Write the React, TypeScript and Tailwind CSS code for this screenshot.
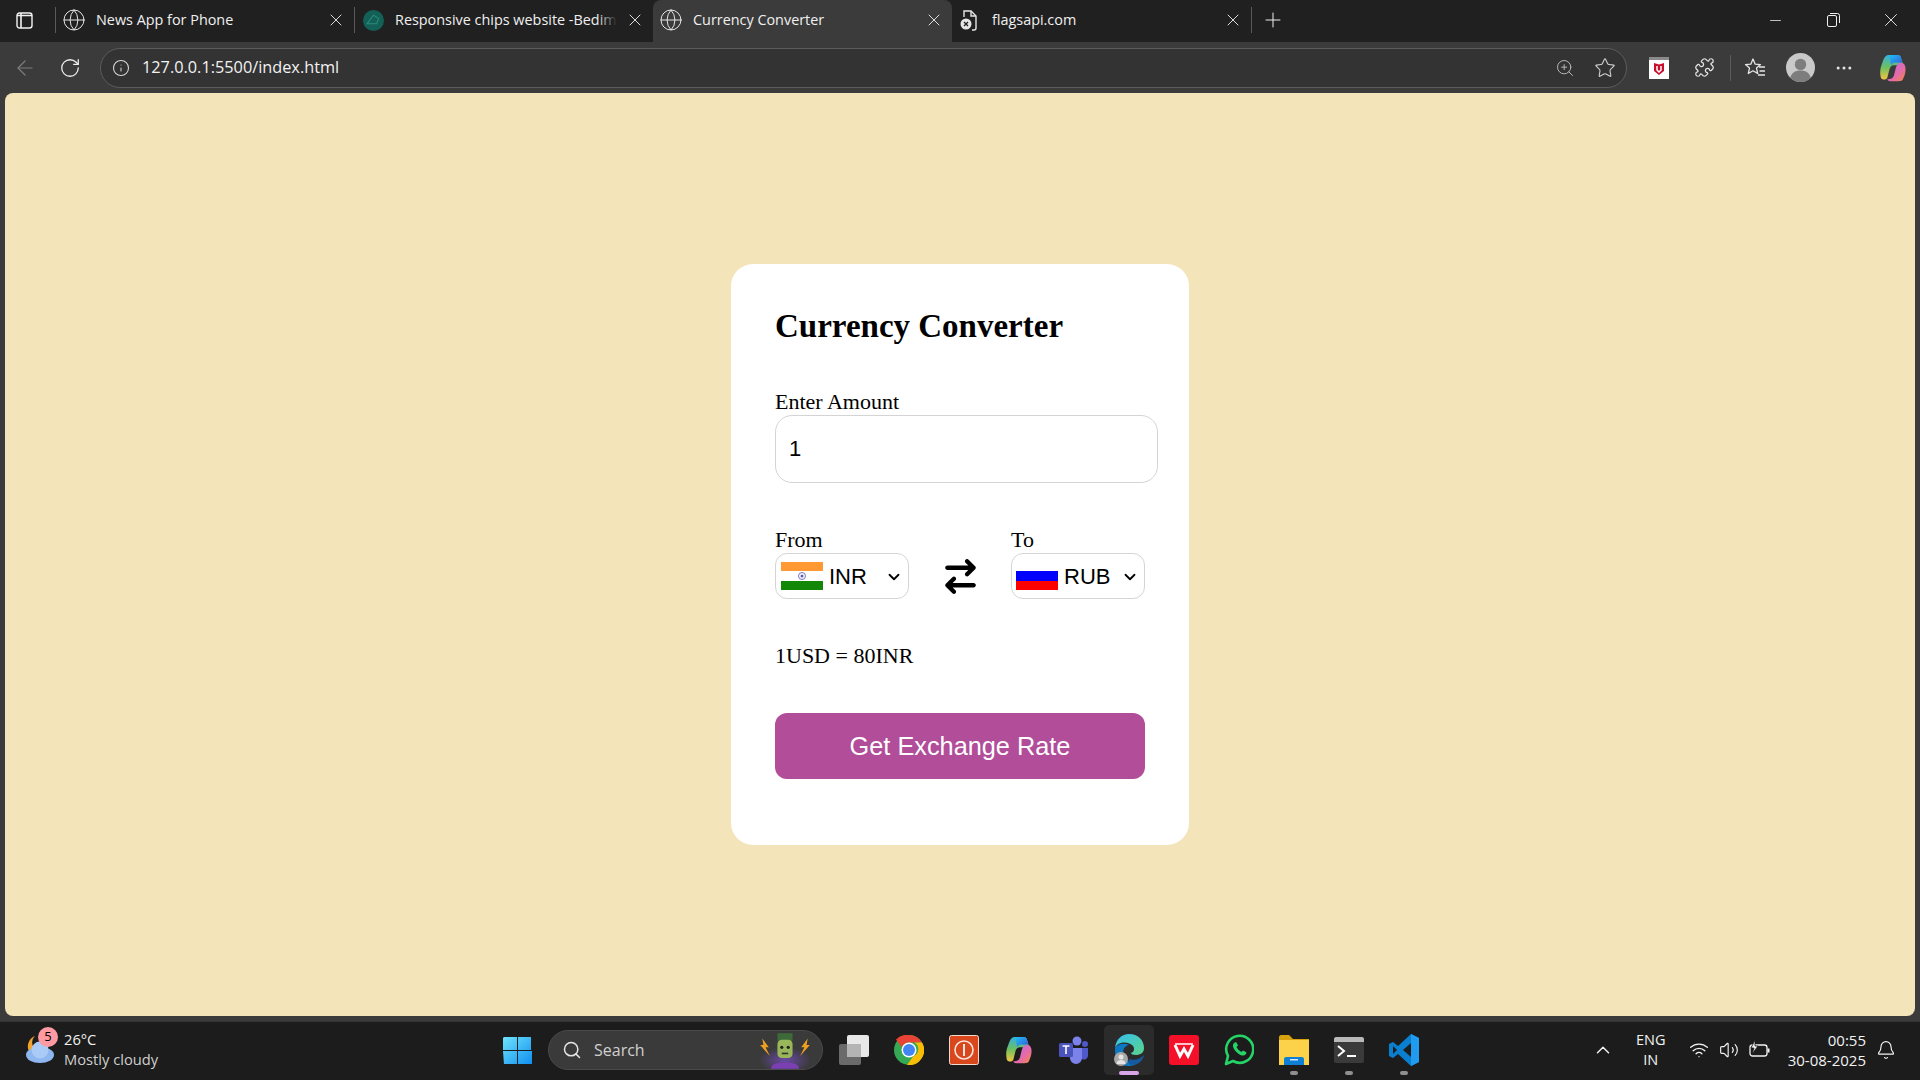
import { ArrowLeft, Bell, ChevronDown, ChevronUp, Globe, Info, Minus, MoreHorizontal, Plus, Puzzle, RotateCw, Search, Star, Volume2, Wifi, X, ZoomIn } from 'lucide-react';
import { FaArrowRightArrowLeft } from 'react-icons/fa6';

const uiFont = 'font-["Open_Sans",sans-serif]';

function CopilotIcon({ size = 26, id }: { size?: number; id: string }) {
  return (
    <svg width={size} height={size} viewBox="0 0 32 32">
      <defs>
        <linearGradient id={`${id}A`} x1="0" y1="0" x2="1" y2="1">
          <stop offset="0" stopColor="#19c3f0" />
          <stop offset="0.6" stopColor="#2f7fe8" />
          <stop offset="1" stopColor="#3a4fc0" />
        </linearGradient>
        <linearGradient id={`${id}B`} x1="0" y1="0" x2="0" y2="1">
          <stop offset="0" stopColor="#35b0e0" />
          <stop offset="0.5" stopColor="#6cc060" />
          <stop offset="1" stopColor="#f5c542" />
        </linearGradient>
        <linearGradient id={`${id}C`} x1="0" y1="0" x2="1" y2="1">
          <stop offset="0" stopColor="#b86be8" />
          <stop offset="0.6" stopColor="#e66ba8" />
          <stop offset="1" stopColor="#f08a3c" />
        </linearGradient>
      </defs>
      <path d="M11 2h10c2 0 3 1 3.500 3L27 13H17c-3 0-4 2-5 5l-2 8c-1 3-6 3-7 0-1-4-1-9 1-14 1.500-4 3-10 7-10z" fill={`url(#${id}B)`} />
      <path d="M12 2h9c2 0 3 1 3.500 3L26 10h-8c-2 0-3 1-4 3z" fill={`url(#${id}A)`} />
      <path d="M23 11c3-1 5 0 6 3 1 4 0 9-2 13-1 3-3 3-5 3h-9c-2 0-3-1-3-2 4 0 6-1 7-4l2-8c1-3 2-5 4-5z" fill={`url(#${id}C)`} />
    </svg>
  );
}

function McAfeeIcon() {
  return (
    <svg width="20" height="22" viewBox="0 0 20 22">
      <rect width="20" height="22" fill="#ffffff" />
      <rect width="20" height="3" fill="#8a8a8a" />
      <path d="M5 6l5 1.500L15 6v8l-5 4-5-4z" fill="#c8102e" />
      <path d="M8 9v4l2 2 2-2V9" fill="none" stroke="#ffffff" strokeWidth="1.500" />
    </svg>
  );
}

function ChipsFavicon() {
  return (
    <svg width="21" height="21" viewBox="0 0 20 20">
      <circle cx="10" cy="10" r="10" fill="#136057" />
      <path d="M4 13l6-8 5 3-2 5z" fill="none" stroke="#2b8a7c" strokeWidth="1" />
    </svg>
  );
}

function BrokenDocIcon() {
  return (
    <svg width="18" height="22" viewBox="0 0 18 22" fill="none" stroke="#e6e6e6" strokeWidth="1.400" className="mr-[2px]">
      <path d="M4 8V2h7l5 5v12c0 1-1 2-2 2h-2" />
      <path d="M11 2v5h5" />
      <circle cx="6" cy="15" r="5.500" fill="#e6e6e6" stroke="none" />
      <path d="M4 13l4 4M8 13l-4 4" stroke="#202020" strokeWidth="1.300" />
    </svg>
  );
}

function FavoritesIcon() {
  return (
    <svg width="22" height="22" viewBox="0 0 22 22" fill="none" stroke="#e6e6e6" strokeWidth="1.300" strokeLinejoin="round">
      <path d="M9 2l2.200 5.200 5.300.4-4 3.500 1.200 5.400L9 13.800l-4.700 2.700 1.200-5.400-4-3.500 5.300-.4z" />
      <path d="M15 10h6M15.500 14h5.500M14 18h7" />
    </svg>
  );
}

function ProfileIcon() {
  return (
    <svg width="29" height="29" viewBox="0 0 28 28">
      <circle cx="14" cy="14" r="14" fill="#c9c9c9" />
      <circle cx="14" cy="11" r="5.500" fill="#7d7d7d" />
      <path d="M4 24c2-6 6-7 10-7s8 1 10 7c-3 3-6 4-10 4s-7-1-10-4z" fill="#7d7d7d" />
    </svg>
  );
}

function WindowsLogo() {
  return (
    <svg width="29" height="29" viewBox="0 0 30 30">
      <defs>
        <linearGradient id="winG" x1="0" y1="0" x2="1" y2="1">
          <stop offset="0" stopColor="#6fe3fb" />
          <stop offset="1" stopColor="#0f8ff0" />
        </linearGradient>
      </defs>
      <path d="M1 1h13.500v13.500H0V2zM15.500 1H29v13.500H15.500zM0 15.500h14.500V29H1zM15.500 15.500H30V29H15.500z" fill="url(#winG)" />
    </svg>
  );
}

function WeatherIcon() {
  return (
    <svg width="34" height="34" viewBox="0 0 34 34">
      <path d="M12 3a9 9 0 0 0 3 15L6 18C3 13 6 5 12 3z" fill="#f2a32e" />
      <ellipse cx="17" cy="22" rx="14" ry="8" fill="#8db7ee" />
      <circle cx="17" cy="17" r="8.500" fill="#a9cbf5" />
    </svg>
  );
}

function FrankIcon() {
  return (
    <svg width="54" height="37" viewBox="0 0 50 34">
      <defs>
        <radialGradient id="glow">
          <stop offset="0" stopColor="#6a49a8" />
          <stop offset="1" stopColor="#6a49a8" stopOpacity="0" />
        </radialGradient>
      </defs>
      <ellipse cx="25" cy="26" rx="24" ry="12" fill="url(#glow)" />
      <path d="M4 6l6 8-3 0 4 8-9-10 3 0zM46 6l-6 8 3 0-4 8 9-10-3 0z" fill="#f0a020" />
      <path d="M12 34c0-5 6-6 13-6s13 1 13 6z" fill="#7a3fb0" />
      <rect x="18" y="1" width="14" height="7" fill="#3e6a3a" />
      <rect x="18" y="7" width="14" height="17" rx="4" fill="#9ab65a" />
      <circle cx="22" cy="14" r="1.500" fill="#222" />
      <circle cx="28" cy="14" r="1.500" fill="#222" />
      <rect x="22" y="19" width="6" height="1.500" fill="#333" />
    </svg>
  );
}

function TaskView() {
  return (
    <svg width="30" height="30" viewBox="0 0 30 30">
      <rect x="8" y="0" width="22" height="22" rx="2" fill="#e8e8e8" />
      <rect x="0" y="9" width="22" height="21" rx="2" fill="#6a6a6a" />
      <rect x="8" y="9" width="14" height="13" fill="#b4b4b4" />
    </svg>
  );
}

function ChromeIcon() {
  return (
    <svg width="30" height="30" viewBox="0 0 30 30">
      <circle cx="15" cy="15" r="15" fill="#34a853" />
      <path d="M15 0a15 15 0 0 1 13 7.500H15a7.500 7.500 0 0 0-7 5L2 4.500A15 15 0 0 1 15 0z" fill="#ea4335" />
      <path d="M28 7.500A15 15 0 0 1 13 30l6.500-9a7.500 7.500 0 0 0 1-13.500z" fill="#fbbc04" />
      <circle cx="15" cy="15" r="7.500" fill="#ffffff" />
      <circle cx="15" cy="15" r="6" fill="#4285f4" />
    </svg>
  );
}

function PowerAppIcon() {
  return (
    <svg width="30" height="30" viewBox="0 0 30 30">
      <rect x="0.500" y="0.500" width="29" height="29" rx="2" fill="#d9481c" stroke="#f4d9cf" />
      <circle cx="15" cy="15" r="9" fill="none" stroke="#f7e4dc" strokeWidth="1.600" />
      <rect x="14" y="9" width="2" height="12" fill="#f7e4dc" />
    </svg>
  );
}

function TeamsIcon() {
  return (
    <svg width="30" height="30" viewBox="0 0 30 30">
      <circle cx="18" cy="6" r="4.500" fill="#7b83eb" />
      <circle cx="26" cy="9" r="3" fill="#5059c9" />
      <path d="M21 13h8v8a4 4 0 0 1-6 3z" fill="#5059c9" />
      <path d="M9 13h14v10a6 6 0 0 1-12 0z" fill="#7b83eb" />
      <rect x="0" y="8" width="14" height="14" rx="1.500" fill="#4b53bc" />
      <path d="M3.500 11h7M7 11v8" stroke="#ffffff" strokeWidth="1.600" />
    </svg>
  );
}

function EdgeIcon() {
  return (
    <svg width="32" height="32" viewBox="0 0 32 32">
      <defs>
        <linearGradient id="edgeTop" x1="0" y1="0" x2="1" y2="1">
          <stop offset="0" stopColor="#35c1f1" />
          <stop offset="1" stopColor="#5bd38a" />
        </linearGradient>
      </defs>
      <path d="M2 14C3 5 9 0 16 0c9 0 15 6 15 14 0 5-4 7-8 7-3 0-5-1-5-2 3-1 4-4 2-7-4-5-15-5-18 2z" fill="url(#edgeTop)" />
      <path d="M2 14c3-5 10-5 14-3-5 1-7 6-5 11 2 4 6 8 12 8-3 2-6 2-8 2C7 32 1 24 2 14z" fill="#0c78c4" />
      <path d="M16 25c6 2 11 0 15-4-1 6-6 10-12 10-2 0-5-2-3-6z" fill="#155a9e" />
      <circle cx="8" cy="25" r="7" fill="#a8a8a8" />
      <circle cx="8" cy="23" r="2.500" fill="#e4e4e4" />
      <path d="M3.500 30c0-3 2-4 4.500-4s4.500 1 4.500 4z" fill="#e4e4e4" />
    </svg>
  );
}

function WpsIcon() {
  return (
    <svg width="30" height="34" viewBox="0 0 30 34">
      <rect y="2" width="30" height="30" rx="3" fill="#f5102a" />
      <path d="M6 12l5 11 4-7 4 7 5-11" fill="none" stroke="#ffffff" strokeWidth="3" />
      <path d="M6 11h18" stroke="#ffffff" strokeWidth="1.500" />
    </svg>
  );
}

function WhatsAppIcon() {
  return (
    <svg width="30" height="34" viewBox="0 0 30 34" fill="none">
      <path d="M2 31l2-8a13.500 13.500 0 1 1 5 5z" stroke="#25d366" strokeWidth="2.600" strokeLinejoin="round" />
      <path d="M10 10c-1 1-1.500 3-.5 5 1.500 3 4 5.500 7 7 2 1 4 .5 5-.5 1-1 1-2 .5-2.500l-3-1.500-1.500 1.500c-2-1-4-3-5-5l1.500-1.500-1.500-3c-.5-.5-1.500-.5-2.500.5z" fill="#25d366" />
    </svg>
  );
}

function FolderIcon() {
  return (
    <svg width="30" height="32" viewBox="0 0 30 32">
      <path d="M0 3c0-1 1-2 2-2h8l4 4h16v6H0z" fill="#d9a30f" />
      <rect y="6" width="30" height="25" fill="#fbd249" />
      <path d="M5 31v-6c0-1 1-2 2-2h16c1 0 2 1 2 2v6z" fill="#0f7fd6" />
      <rect x="11" y="25" width="8" height="1.500" fill="#cfe8fb" />
    </svg>
  );
}

function TerminalIcon() {
  return (
    <svg width="30" height="26" viewBox="0 0 30 26">
      <rect width="30" height="26" rx="2" fill="#3a3a3a" />
      <path d="M0 2c0-1 1-2 2-2h26c1 0 2 1 2 2v3H0z" fill="#b9b9b9" />
      <path d="M4 9l6 5-6 5" fill="none" stroke="#ffffff" strokeWidth="2" />
      <rect x="13" y="18" width="9" height="2" fill="#ffffff" />
    </svg>
  );
}

function VsCodeIcon() {
  return (
    <svg width="30" height="34" viewBox="0 0 30 34">
      <path d="M22 1l8 4v24l-8 4-13-12-5 4-4-2V11l4-2 5 4z" fill="#0a7fd0" />
      <path d="M22 1l8 4v24l-8 4z" fill="#1f9cf0" />
      <path d="M22 10l-8 7 8 7z" fill="#1d1d1d" />
      <path d="M4 13v8l4-4z" fill="#1d1d1d" />
    </svg>
  );
}

function BatteryIcon() {
  return (
    <svg width="22" height="20" viewBox="0 0 22 20" fill="none" stroke="#f2f2f2" strokeWidth="1.300">
      <rect x="1" y="5" width="17" height="11" rx="2.500" />
      <path d="M19.500 8.500v4" strokeWidth="2" />
      <path d="M6 0L2 8h3l-2 6 6-8H6z" fill="#f2f2f2" stroke="#1c1c1c" strokeWidth="0.800" />
    </svg>
  );
}

function Tab({ icon, title, active = false, width = 298 }: { icon: React.ReactNode; title: string; active?: boolean; width?: number }) {
  return (
    <div
      className={`flex h-full shrink-0 items-center pb-[2px] pl-[6px] pr-[8px] ${active ? 'rounded-t-[8px] bg-[#3b3b3b]' : ''}`}
      style={{ width }}
    >
      <span className="flex w-[24px] shrink-0 justify-center text-[#e6e6e6]">{icon}</span>
      <span className="relative ml-[10px] w-[222px] overflow-hidden whitespace-nowrap text-[14.4px] text-[#f0f0f0]">
        {title}
        {!active && <span className="absolute inset-y-0 right-0 w-[20px] bg-gradient-to-r from-transparent to-[#202020]" />}
      </span>
      <X size={20} strokeWidth={1.1} className="ml-auto shrink-0 text-[#eeeeee]" />
    </div>
  );
}

function Divider() {
  return <span className="mb-[2px] h-[26px] w-px shrink-0 bg-[#5a5a5a]" />;
}

function TaskSlot({ children, active = false, dot = false }: { children: React.ReactNode; active?: boolean; dot?: boolean }) {
  return (
    <div className={`relative mx-[2.500px] flex h-[50px] w-[50px] items-center justify-center rounded-[5px] ${active ? 'bg-[#2b2b2b]' : ''}`}>
      {children}
      {active && <span className="absolute bottom-[0px] left-[15px] h-[4px] w-[20px] rounded-full bg-[#d8a5e8]" />}
      {dot && <span className="absolute bottom-[0px] left-[21px] h-[4px] w-[8px] rounded-full bg-[#8f8f8f]" />}
    </div>
  );
}

function CurrencySelect({ flag, code }: { flag: React.ReactNode; code: string }) {
  return (
    <div className="relative flex h-[46px] w-[134px] items-center rounded-[12px] border border-[#d4d4d4] pl-[5px]">
      {flag}
      <select defaultValue={code} className="ml-[6px] h-full flex-1 appearance-none font-['Liberation_Sans',sans-serif] text-[22px] text-black outline-none">
        <option value={code}>{code}</option>
      </select>
      <ChevronDown size={18} strokeWidth={2.4} className="pointer-events-none absolute right-[5px] top-[14px] text-black" />
    </div>
  );
}

const indiaFlag = (
  <svg width="42" height="28" viewBox="0 0 42 28" className="shrink-0">
    <rect width="42" height="28" fill="#ffffff" />
    <rect width="42" height="9" fill="#ff9933" />
    <rect y="19" width="42" height="9" fill="#138808" />
    <circle cx="21" cy="14" r="3.500" fill="none" stroke="#7474c4" strokeWidth="1" />
    <circle cx="21" cy="14" r="1.500" fill="#5a5ab8" />
  </svg>
);

const russiaFlag = (
  <svg width="42" height="28" viewBox="0 0 42 28" className="ml-[-1px] shrink-0">
    <rect width="42" height="28" fill="#ffffff" />
    <rect y="9" width="42" height="10" fill="#0000ff" />
    <rect y="19" width="42" height="9" fill="#ff0000" />
  </svg>
);

export default function App() {
  return (
    <div className={`flex h-screen w-full flex-col overflow-hidden bg-[#3b3b3b] ${uiFont}`}>
      {/* Tab strip */}
      <div className="flex h-[42px] shrink-0 items-center bg-[#202020] pl-[16px]">
        <svg width="17" height="17" viewBox="0 0 17 17" fill="none" stroke="#f2f2f2" strokeWidth="1.400" className="mb-[2px] mr-[22px] shrink-0">
          <rect x="1" y="1" width="15" height="15" rx="2.500" />
          <path d="M1 3.500h15M5 1v15" strokeWidth="1.600" />
        </svg>
        <Divider />
        <Tab icon={<Globe size={24} strokeWidth={1} />} title="News App for Phone" />
        <Divider />
        <Tab icon={<ChipsFavicon />} title="Responsive chips website -Bedimcode" />
        <Tab active width={299} icon={<Globe size={24} strokeWidth={1} />} title="Currency Converter" />
        <Tab width={299} icon={<BrokenDocIcon />} title="flagsapi.com" />
        <Divider />
        <Plus size={24} strokeWidth={1} className="mb-[2px] ml-[9px] text-[#eeeeee]" />
        <div className="mb-[2px] ml-auto flex items-center text-[#eeeeee]">
          <span className="flex w-[58px] justify-center"><Minus size={17} strokeWidth={1.1} /></span>
          <span className="flex w-[58px] justify-center">
            <svg width="13" height="14" viewBox="0 0 13 14" fill="none" stroke="#eeeeee" strokeWidth="1">
              <rect x="0.500" y="2.500" width="9" height="11" rx="1.500" />
              <path d="M3 0.500h7.500a2 2 0 0 1 2 2V10" />
            </svg>
          </span>
          <span className="flex w-[58px] justify-center"><X size={22} strokeWidth={1} /></span>
        </div>
      </div>

      {/* Toolbar */}
      <div className="flex h-[51px] shrink-0 items-center pl-[13px]">
        <ArrowLeft size={24} strokeWidth={1.2} className="text-[#7d7d7d]" />
        <RotateCw size={22} strokeWidth={1.4} className="ml-[22px] text-[#eeeeee]" />
        <div className="ml-[19px] flex h-[40px] w-[1527px] items-center rounded-full border-[1.5px] border-[#5c5c5c] bg-[#333333] pl-[11px] pr-[10px]">
          <Info size={18} strokeWidth={1.4} className="text-[#d8d8d8]" />
          <span className="ml-[12px] text-[16.3px] text-[#f2f2f2]">127.0.0.1:5500/index.html</span>
          <ZoomIn size={20} strokeWidth={1.2} className="ml-auto text-[#b8b8b8]" />
          <Star size={22} strokeWidth={1.2} className="ml-[19px] text-[#d0d0d0]" />
        </div>
        <div className="ml-[22px] flex items-center"><McAfeeIcon /></div>
        <Puzzle size={21} strokeWidth={1.4} className="ml-[25px] text-[#e6e6e6]" />
        <span className="ml-[15px] h-[26px] w-px bg-[#5a5a5a]" />
        <span className="ml-[13px]"><FavoritesIcon /></span>
        <span className="ml-[20px]"><ProfileIcon /></span>
        <MoreHorizontal size={20} strokeWidth={1.6} className="ml-[19px] text-[#e6e6e6]" />
        <span className="ml-[24px]"><CopilotIcon size={30} id="copToolbar" /></span>
      </div>

      {/* Page */}
      <main className="mx-[5px] flex h-[923px] shrink-0 items-center justify-center rounded-[8px] bg-[#f4e4ba] font-['Liberation_Serif',serif]">
        <div className="h-[581px] w-[458px] rounded-[22px] bg-white px-[44px] pt-[44px] text-black">
          <h2 className="text-[33px] font-bold leading-[36px]">Currency Converter</h2>
          <label className="mt-[46px] block pb-[1px] text-[22px] leading-[24px]">Enter Amount</label>
          <input
            readOnly
            value="1"
            className="block h-[68px] w-[383px] rounded-[17px] border border-[#d4d4d4] px-[13px] font-['Liberation_Sans',sans-serif] text-[22px] outline-none"
          />
          <div className="mt-[45px] flex items-end justify-between">
            <div>
              <label className="block pb-[1px] text-[22px] leading-[24px]">From</label>
              <CurrencySelect flag={indiaFlag} code="INR" />
            </div>
            <FaArrowRightArrowLeft size={35} className="mb-[5px]" />
            <div>
              <label className="block pb-[1px] text-[22px] leading-[24px]">To</label>
              <CurrencySelect flag={russiaFlag} code="RUB" />
            </div>
          </div>
          <p className="mt-[45px] text-[22px] leading-[24px]">1USD = 80INR</p>
          <button className="mt-[45px] h-[66px] w-full rounded-[12px] bg-[#b14d99] pt-[1px] font-['Liberation_Sans',sans-serif] text-[25.3px] text-white">
            Get Exchange Rate
          </button>
        </div>
      </main>

      {/* Taskbar */}
      <div className="mt-[5px] flex flex-1 items-center border-t border-[#333333] bg-[#1c1c1c] pb-[2px]">
        <div className="flex w-[503px] shrink-0 items-center pl-[23px]">
          <div className="relative">
            <WeatherIcon />
            <span className="absolute left-[15px] top-[-6px] flex h-[20px] w-[20px] items-center justify-center rounded-full bg-[#ff9aa2] text-[13px] text-black">5</span>
          </div>
          <div className="mb-[2px] ml-[7px] flex flex-col text-[14.7px] leading-[20px]">
            <span className="text-[#f2f2f2]">26°C</span>
            <span className="text-[#cfcfcf]">Mostly cloudy</span>
          </div>
        </div>
        <WindowsLogo />
        <div className="ml-[16px] flex h-[40px] w-[275px] shrink-0 items-center rounded-full border border-[#4a4a4a] bg-[#3a3a3a] pl-[13px] pr-[10px]">
          <Search size={20} strokeWidth={1.8} className="text-[#e6e6e6]" />
          <span className="ml-[12px] text-[16px] text-[#d0d0d0]">Search</span>
          <span className="ml-auto"><FrankIcon /></span>
        </div>
        <div className="ml-[3.500px] flex items-center">
          <TaskSlot><TaskView /></TaskSlot>
          <TaskSlot><ChromeIcon /></TaskSlot>
          <TaskSlot><PowerAppIcon /></TaskSlot>
          <TaskSlot><CopilotIcon size={30} id="copTask" /></TaskSlot>
          <TaskSlot><TeamsIcon /></TaskSlot>
          <TaskSlot active><EdgeIcon /></TaskSlot>
          <TaskSlot><WpsIcon /></TaskSlot>
          <TaskSlot><WhatsAppIcon /></TaskSlot>
          <TaskSlot dot><FolderIcon /></TaskSlot>
          <TaskSlot dot><TerminalIcon /></TaskSlot>
          <TaskSlot dot><VsCodeIcon /></TaskSlot>
        </div>
        <div className="ml-auto flex items-center pr-[24px] text-[#f2f2f2]">
          <ChevronUp size={22} strokeWidth={1.6} />
          <div className="ml-[20px] flex w-[34px] flex-col items-center text-[14.5px] leading-[20px]">
            <span>ENG</span>
            <span>IN</span>
          </div>
          <Wifi size={20} strokeWidth={1.6} className="ml-[21px]" />
          <Volume2 size={20} strokeWidth={1.4} className="ml-[10px]" />
          <span className="ml-[10px]"><BatteryIcon /></span>
          <div className="ml-[17px] flex flex-col items-end text-[15px] leading-[20px]">
            <span>00:55</span>
            <span>30-08-2025</span>
          </div>
          <Bell size={20} strokeWidth={1.4} className="ml-[10px]" />
        </div>
      </div>
    </div>
  );
}
